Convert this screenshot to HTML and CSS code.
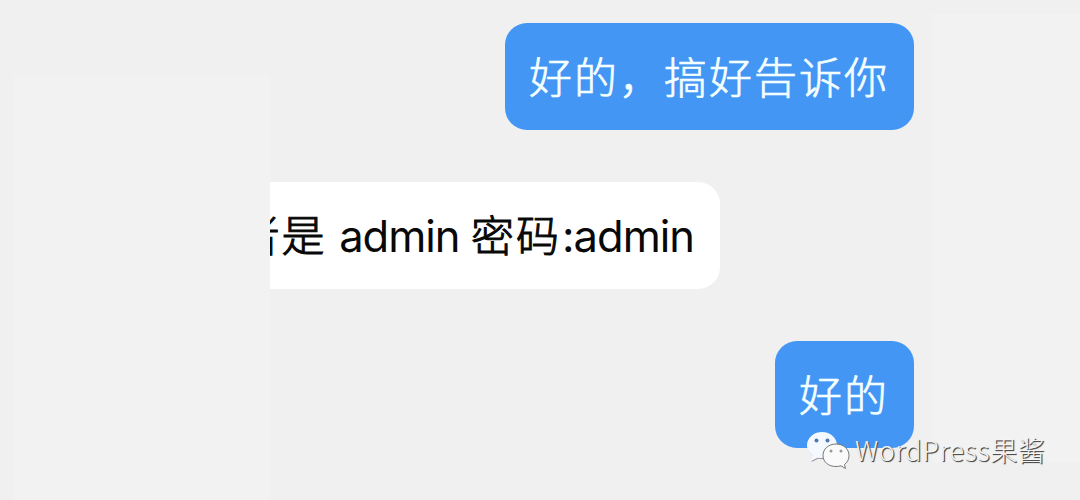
FILE: index.html
```
<!DOCTYPE html>
<html lang="zh-CN">
<head>
    <meta charset="UTF-8">
    <meta name="viewport" content="width=device-width, initial-scale=1.0">
    <title>聊天</title>
    <link rel="stylesheet" href="styles.css">
</head>
<body>
    <div class="page">
        <div class="mask mask-left"></div>
        <main class="chat">
            <p class="bubble sent">好的，搞好告诉你</p>
            <p class="bubble received">者是 <span class="latin">admin</span> 密码<span class="latin">:admin</span></p>
            <p class="bubble sent">好的</p>
        </main>
        <div class="mask mask-right"></div>
    </div>
    <div class="watermark">
        <svg class="wechat" viewBox="0 0 44 40" width="44" height="40">
            <path class="shade" d="M16 2C7.500 2 1.500 7.800 1.500 15C1.500 19.300 3.500 22.500 7 25L5.500 31L12 27.700Q13.500 28 17 28C25 28 31 22 31 15C31 7.500 24.500 2 16 2Z"/>
            <path class="bubble-icon" d="M16 1C7.500 1 1 7 1 14.500C1 18.800 3 22 6.500 24.500L5 30L11.500 26.700Q13.500 27 17 27C25 27 31 21 31 14.500C31 7 24.500 1 16 1Z"/>
            <path class="bubble-icon line" d="M30 13C22.500 13 17 18 17 24.500C17 31 22.500 35.500 30 35.500Q32.500 35.500 35 34.800L39.500 37.500L38.500 33.500C41.500 31.300 43 28.200 43 24.500C43 18 37.500 13 30 13Z"/>
            <circle class="eye" cx="10.500" cy="9.500" r="2"/>
            <circle class="eye" cx="21.500" cy="9.500" r="2"/>
            <circle class="eye small" cx="25" cy="20" r="1.500"/>
            <circle class="eye small" cx="35" cy="20" r="1.500"/>
        </svg>
        <span>WordPress果酱</span>
    </div>
</body>
</html>
```
FILE: styles.css
```
*{
    box-sizing: border-box;
}
body{
    margin: 0;
    background-color: #f0f0f0;
    font-family: "Noto Sans CJK SC", sans-serif;
}
.page{
    display: grid;
    grid-template-columns: 270px 644px 1fr;
    width: 1080px;
    height: 500px;
    overflow: hidden;
}
.mask{
    background-color: #f2f2f2;
}
.mask-left{
    margin: 76px 0 0 14px;
}
.mask-right{
    margin: 14px 0 38px 18px;
}
.chat{
    display: flex;
    flex-direction: column;
    gap: 52px;
    padding-top: 22.500px;
}
.bubble{
    height: 107px;
    margin: 0;
    padding: 0 24px;
    border-radius: 22px;
    font-size: 43px;
    letter-spacing: 2px;
    font-weight: 300;
    line-height: 104px;
    white-space: nowrap;
}
.sent{
    align-self: flex-end;
    padding-right: 25px;
    background-color: #4496f4;
    color: #f4ffff;
    -webkit-text-stroke: 0.700px #f4ffff;
}
.received{
    display: flex;
    align-self: flex-start;
    width: 450px;
    justify-content: flex-end;
    overflow: hidden;
    white-space: pre;
    padding: 0 26px 0 0;
    border-radius: 0 22px 22px 0;
    background-color: white;
    color: #080808;
    line-height: 102px;
    -webkit-text-stroke: 1px #080808;
}
.latin{
    margin-left: 1px;
    font-family: Inter, sans-serif;
    font-size: 43.500px;
    font-weight: 400;
    letter-spacing: -1px;
    line-height: 108px;
    -webkit-text-stroke: 0;
}
.watermark{
    position: absolute;
    left: 806px;
    top: 431px;
    display: flex;
    gap: 5px;
    color: #f4f4f4;
    font-size: 27px;
    letter-spacing: 0.600px;
    font-weight: 300;
    line-height: 38px;
    text-shadow: 1px 1px 1px #444, 1px 1px 0 #888;
}
.shade{
    fill: #9a9a9a;
}
.bubble-icon{
    fill: #f3f9ff;
}
.line{
    fill: #fafafa;
    stroke: #777;
    stroke-width: 1;
}
.eye{
    fill: #5277ae;
}
.small{
    fill: #999;
}
```
